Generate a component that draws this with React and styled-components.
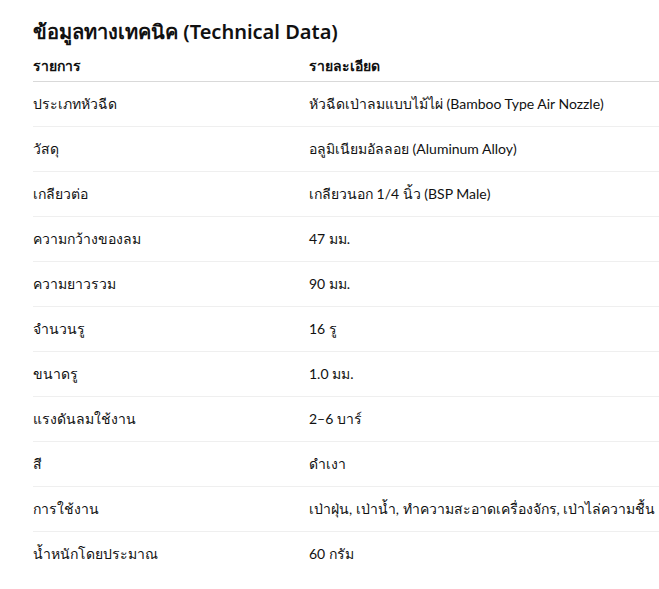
import styled, { createGlobalStyle } from "styled-components";

const specs = [
  ["ประเภทหัวฉีด", "หัวฉีดเป่าลมแบบไม้ไผ่ (Bamboo Type Air Nozzle)"],
  ["วัสดุ", "อลูมิเนียมอัลลอย (Aluminum Alloy)"],
  ["เกลียวต่อ", "เกลียวนอก 1/4 นิ้ว (BSP Male)"],
  ["ความกว้างของลม", "47 มม."],
  ["ความยาวรวม", "90 มม."],
  ["จำนวนรู", "16 รู"],
  ["ขนาดรู", "1.0 มม."],
  ["แรงดันลมใช้งาน", "2–6 บาร์"],
  ["สี", "ดำเงา"],
  ["การใช้งาน", "เป่าฝุ่น, เป่าน้ำ, ทำความสะอาดเครื่องจักร, เป่าไล่ความชื้น"],
  ["น้ำหนักโดยประมาณ", "60 กรัม"],
];

const GlobalStyle = createGlobalStyle`
  body {
    margin: 0;
    background: #fff;
    overflow: hidden;
    font-family: "Segoe UI", Lato, "Noto Sans", sans-serif;
    color: #111;
  }
`;

const Page = styled.div`
  padding: 18px 0 0 33px;
`;

const Title = styled.h2`
  margin: 0;
  font-family: "Noto Sans", sans-serif;
  font-size: 20px;
  line-height: 28px;
  font-weight: 600;
`;

const Table = styled.table`
  width: 640px;
  border-collapse: collapse;
  table-layout: fixed;
  font-size: 14px;
`;

const HeadCell = styled.th`
  text-align: left;
  font-weight: 700;
  padding: 10px 0 5px;
  line-height: 20px;
  border-bottom: 1px solid #d9d9d9;
  width: ${(p) => p.$width || "auto"};
`;

const Row = styled.tr`
  border-bottom: 1px solid ${(p) => (p.$last ? "transparent" : "#efefef")};
`;

const Cell = styled.td`
  padding: 12px 0;
  line-height: 20px;
  white-space: nowrap;
`;

export default function App() {
  return (
    <Page>
      <GlobalStyle />
      <Title>ข้อมูลทางเทคนิค (Technical Data)</Title>
      <Table>
        <thead>
          <tr>
            <HeadCell $width="276px">รายการ</HeadCell>
            <HeadCell>รายละเอียด</HeadCell>
          </tr>
        </thead>
        <tbody>
          {specs.map(([name, value], i) => (
            <Row key={name} $last={i === specs.length - 1}>
              <Cell>{name}</Cell>
              <Cell>{value}</Cell>
            </Row>
          ))}
        </tbody>
      </Table>
    </Page>
  );
}
